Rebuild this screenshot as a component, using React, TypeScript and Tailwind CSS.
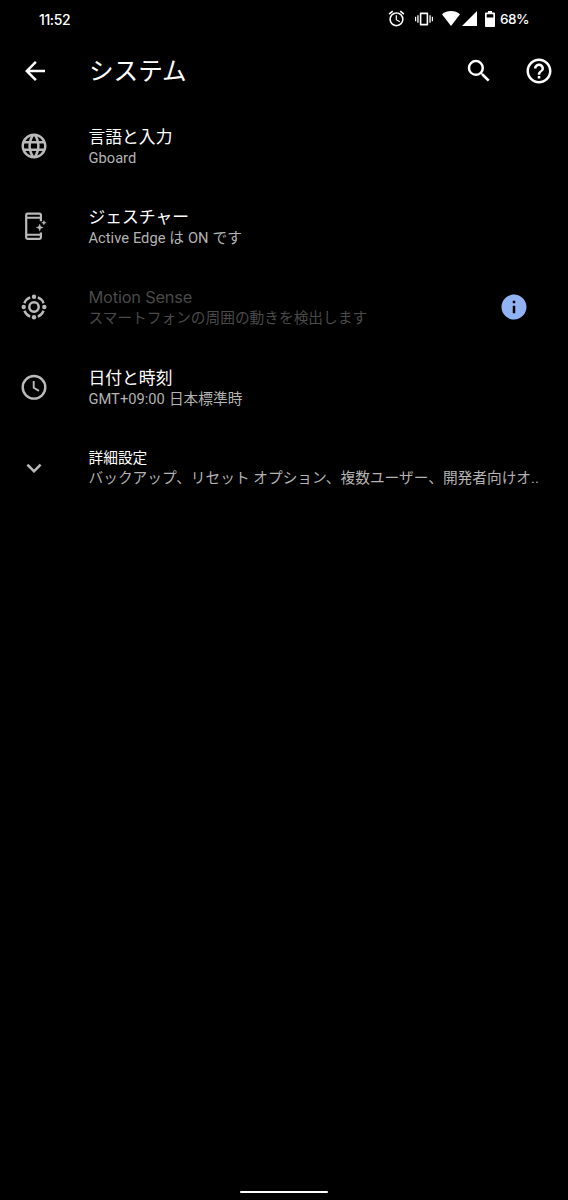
import type { ReactNode } from 'react'
import { MdAlarm, MdArrowBack, MdExpandMore, MdHelpOutline, MdInfo, MdLanguage, MdSearch } from 'react-icons/md'

interface SettingRowProps {
  icon: ReactNode
  title: string
  summary: string
  titleClass?: string
  summaryClass?: string
  action?: ReactNode
}

function VibrationIcon() {
  return (
    <svg className="w-[18px] h-[18px]" viewBox="0 0 18 18" fill="currentColor" fillRule="evenodd">
      <path d="M0 6.700h1.200v4.600H0zM2.300 5.200h1.300v7.600H2.300zM14.400 5.200h1.300v7.600h-1.300zM16.800 6.700H18v4.600h-1.200z" />
      <path d="M5.800 2.400h6.400c.6 0 1 .4 1 1v11.200c0 .6-.4 1-1 1H5.800c-.6 0-1-.4-1-1V3.400c0-.6.4-1 1-1zM6.400 4.300v9.400h5.200V4.300z" />
    </svg>
  )
}

function WifiIcon() {
  return (
    <svg className="w-[18px] h-[15px]" viewBox="0 0 18 15" fill="currentColor">
      <path d="M0 3.200C2.600 1.100 5.600 0 9 0s6.400 1.100 9 3.200L9 15z" />
    </svg>
  )
}

function SignalIcon() {
  return (
    <svg className="w-[15px] h-[15px]" viewBox="0 0 15 15" fill="currentColor">
      <path d="M15 0v15H0z" />
    </svg>
  )
}

function BatteryIcon() {
  return (
    <svg className="w-[10px] h-4" viewBox="0 0 10 16" fill="currentColor" fillRule="evenodd">
      <path d="M3 0h4v1.600h2.200c.5 0 .8.3.8.8v12.800c0 .5-.3.8-.8.8H.8c-.5 0-.8-.3-.8-.8V2.400c0-.5.3-.8.8-.8H3zM1.700 3.300v3.200h6.600V3.300z" />
    </svg>
  )
}

function GestureIcon() {
  return (
    <svg className="w-[30px] h-[30px]" viewBox="-1.3 0 30 30" fill="none" stroke="currentColor" strokeWidth="2.200">
      <path d="M20.600 10.300V3.900c0-.8-.6-1.300-1.300-1.300H7.200c-.8 0-1.300.5-1.300 1.300v22.700c0 .8.500 1.300 1.300 1.300h12.100c.700 0 1.300-.5 1.300-1.300v-5.200" />
      <path d="M6 6.700h14.600M6 23.800h14.600" strokeWidth="2" />
      <path d="M19.400 13l1 2.600 2.600 1-2.600 1-1 2.600-1-2.600-2.600-1 2.600-1zM23.600 9.400l.7 1.600 1.600.7-1.600.7-.7 1.600-.7-1.600-1.600-.7 1.600-.7z" fill="currentColor" strokeWidth="0.300" />
    </svg>
  )
}

function MotionIcon() {
  return (
    <svg className="w-[30px] h-[30px]" viewBox="0 0 30 30" fill="none" stroke="currentColor" strokeWidth="2.400">
      <circle cx="15" cy="15" r="4.700" strokeWidth="2.500" />
      <path d="M18.800 5.400a10.300 10.300 0 0 1 5.800 5.800M24.600 18.800a10.300 10.300 0 0 1-5.800 5.800M11.200 24.600a10.300 10.300 0 0 1-5.800-5.800M5.400 11.200a10.300 10.300 0 0 1 5.800-5.800" />
      <g fill="currentColor" stroke="none">
        <circle cx="15" cy="4.700" r="2.200" />
        <circle cx="25.300" cy="15" r="2.200" />
        <circle cx="15" cy="25.300" r="2.200" />
        <circle cx="4.700" cy="15" r="2.200" />
      </g>
    </svg>
  )
}

function ClockIcon() {
  return (
    <svg className="w-[30px] h-[30px]" viewBox="0 0 30 30" fill="none" stroke="currentColor">
      <circle cx="15" cy="15.300" r="11.300" strokeWidth="2.400" />
      <path d="M14.700 9v6.700l5.300 3.200" strokeWidth="1.900" />
    </svg>
  )
}

function SettingRow({ icon, title, summary, titleClass, summaryClass, action }: SettingRowProps) {
  return (
    <div className="flex items-center h-[80.4px] pl-[19px] pr-[28px]">
      <div className="w-[30px] shrink-0 mb-px text-[#bababa]">{icon}</div>
      <div className="flex-1 min-w-0 ml-[39.5px]">
        <p className={`whitespace-nowrap ${titleClass || 'text-[16.8px] leading-[22px] text-white'}`}>{title}</p>
        <p className={`text-[14.7px] leading-[20px] whitespace-nowrap ${summaryClass || 'text-[#b3b3b3]'}`}>{summary}</p>
      </div>
      {action}
    </div>
  )
}

export default function App() {
  return (
    <div className="flex flex-col w-[568px] h-[1200px] bg-black text-white overflow-hidden font-[Roboto,'Noto_Sans_CJK_JP',sans-serif]">
      <div className="flex items-center h-[38px] pl-[39px] pr-[39px] font-['Inter','Noto_Sans_CJK_JP',sans-serif] font-medium text-[14px]">
        <span className="tracking-[-0.4px]">11:52</span>
        <div className="flex items-center ml-auto">
          <MdAlarm className="w-[19px] h-[19px]" />
          <div className="ml-[9px]"><VibrationIcon /></div>
          <div className="ml-[9px] mb-px"><WifiIcon /></div>
          <div className="ml-[2px] mb-px"><SignalIcon /></div>
          <div className="ml-[8px]"><BatteryIcon /></div>
          <span className="ml-[5px] w-[29px] text-[13.6px] whitespace-nowrap tracking-[-0.6px]">68%</span>
        </div>
      </div>

      <div className="flex items-center h-[68.35px] pl-[20px] pr-[15px] pb-[2px]">
        <MdArrowBack className="w-[30px] h-[30px]" />
        <h1 className="ml-[39px] mt-px text-[24.6px] leading-[36px]">システム</h1>
        <MdSearch className="w-[30px] h-[30px] ml-auto" />
        <MdHelpOutline className="w-[30px] h-[30px] ml-[30px] -mr-[0.5px]" />
      </div>

      <SettingRow icon={<MdLanguage className="w-[30px] h-[30px]" />} title="言語と入力" summary="Gboard" />
      <SettingRow icon={<GestureIcon />} title="ジェスチャー" summary="Active Edge は ON です" summaryClass="text-[#b3b3b3] [word-spacing:0.3px]" />
      <SettingRow
        icon={<MotionIcon />}
        title="Motion Sense"
        summary="スマートフォンの周囲の動きを検出します"
        titleClass="font-[Inter,sans-serif] text-[16.4px] leading-[22px] tracking-[-0.2px] text-[#4a4a4a]"
        summaryClass="text-[#4a4a4a]"
        action={<MdInfo className="w-[30px] h-[30px] mr-[11px] text-[#91b3f4]" />}
      />
      <SettingRow icon={<ClockIcon />} title="日付と時刻" summary="GMT+09:00 日本標準時" summaryClass="text-[#b3b3b3] [word-spacing:0.5px]" />
      <SettingRow
        icon={<MdExpandMore className="w-[30px] h-[30px]" />}
        title="詳細設定"
        summary="バックアップ、リセット オプション、複数ユーザー、開発者向けオ.."
        titleClass="text-[14.7px] leading-[20px] text-white"
      />

      <div className="mt-auto mb-[7px] mx-auto w-[88px] h-[2px] rounded-full bg-white" />
    </div>
  )
}
